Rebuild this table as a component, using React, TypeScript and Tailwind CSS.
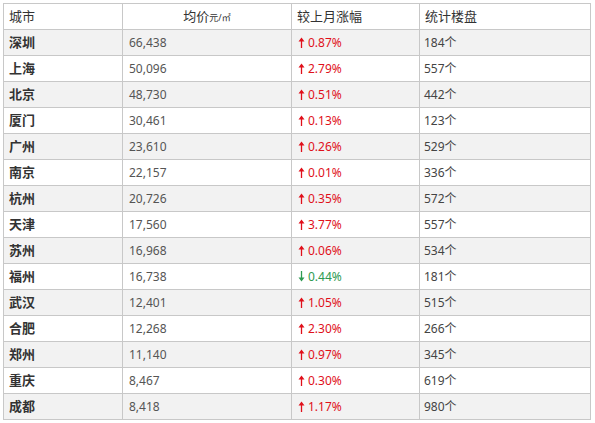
import React from "react";

type Row = { city: string; price: string; change: string; up: boolean; count: string };

const rows: Row[] = [
  { city: "深圳", price: "66,438", change: "0.87%", up: true, count: "184" },
  { city: "上海", price: "50,096", change: "2.79%", up: true, count: "557" },
  { city: "北京", price: "48,730", change: "0.51%", up: true, count: "442" },
  { city: "厦门", price: "30,461", change: "0.13%", up: true, count: "123" },
  { city: "广州", price: "23,610", change: "0.26%", up: true, count: "529" },
  { city: "南京", price: "22,157", change: "0.01%", up: true, count: "336" },
  { city: "杭州", price: "20,726", change: "0.35%", up: true, count: "572" },
  { city: "天津", price: "17,560", change: "3.77%", up: true, count: "557" },
  { city: "苏州", price: "16,968", change: "0.06%", up: true, count: "534" },
  { city: "福州", price: "16,738", change: "0.44%", up: false, count: "181" },
  { city: "武汉", price: "12,401", change: "1.05%", up: true, count: "515" },
  { city: "合肥", price: "12,268", change: "2.30%", up: true, count: "266" },
  { city: "郑州", price: "11,140", change: "0.97%", up: true, count: "345" },
  { city: "重庆", price: "8,467", change: "0.30%", up: true, count: "619" },
  { city: "成都", price: "8,418", change: "1.17%", up: true, count: "980" },
];

function Arrow({ up }: { up: boolean }) {
  return (
    <svg width="7" height="11" viewBox="0 0 7 11" className="mr-[3px] shrink-0">
      {up ? (
        <>
          <path d="M3.5 2v9" stroke="currentColor" strokeWidth="1.3" />
          <path d="M0.5 4.5 3.5 0.5 6.5 4.5Z" fill="currentColor" />
        </>
      ) : (
        <>
          <path d="M3.5 0v9" stroke="currentColor" strokeWidth="1.3" />
          <path d="M0.5 6.5 3.5 10.5 6.5 6.5Z" fill="currentColor" />
        </>
      )}
    </svg>
  );
}

const cell = "h-[26px] border-r border-b border-[#c8c8c8] flex items-center";

export default function App() {
  return (
    <div className="bg-white w-[595px] h-[423px] pt-[3px] pl-[3px] font-['Noto_Sans','Noto_Sans_CJK_SC',sans-serif]">
      <div className="grid grid-cols-[119px_169px_128px_171px] w-[588px] border-l border-t border-[#c8c8c8]">
        <div className={`${cell} pl-[5px] text-[13px] text-[#333]`}>城市</div>
        <div className={`${cell} justify-center text-[13px] text-[#333]`}>
          均价<span className="text-[9px] mt-[2px]">元/㎡</span>
        </div>
        <div className={`${cell} pl-[5px] text-[13px] text-[#333]`}>较上月涨幅</div>
        <div className={`${cell} pl-[5px] text-[13px] text-[#333]`}>统计楼盘</div>

        {rows.map((r, i) => {
          const bg = i % 2 === 0 ? "bg-[#f2f2f2]" : "bg-white";
          return (
            <React.Fragment key={r.city}>
              <div className={`${cell} ${bg} pl-[5px] text-[13px] font-bold text-[#333]`}>{r.city}</div>
              <div className={`${cell} ${bg} pl-[6px] text-[12px] text-[#555]`}>{r.price}</div>
              <div
                className={`${cell} ${bg} pl-[6px] text-[12px] ${r.up ? "text-[#e0101b]" : "text-[#2e9a52]"}`}
              >
                <Arrow up={r.up} />
                {r.change}
              </div>
              <div className={`${cell} ${bg} pl-[4px] text-[12px] text-[#444]`}>{r.count}个</div>
            </React.Fragment>
          );
        })}
      </div>
    </div>
  );
}
